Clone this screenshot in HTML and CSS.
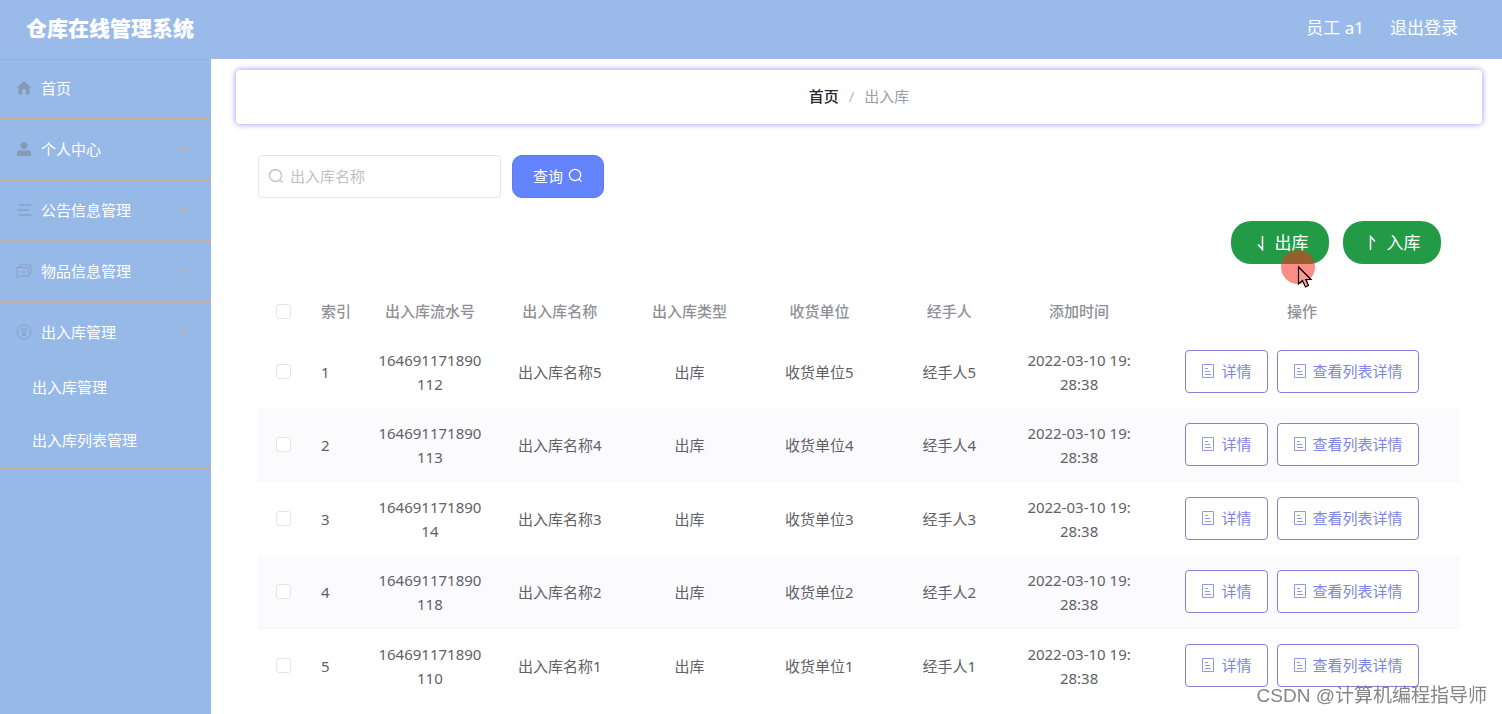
FILE: index.html
```html
<!DOCTYPE html>
<html lang="zh-CN">
<head>
<meta charset="utf-8">
<title>仓库在线管理系统</title>
<link rel="stylesheet" href="styles.css">
</head>
<body>
<svg class="sprite" aria-hidden="true">
  <symbol id="doc" viewBox="0 0 14 14"><path d="M1.5 .5h11v13h-11zM4 4.500h3M4 7.500h5M4 10.500h6" fill="none" stroke="currentColor" stroke-opacity=".85"/></symbol>
  <symbol id="search" viewBox="0 0 16 16"><circle cx="7.500" cy="7.500" r="6" fill="none" stroke="currentColor" stroke-width="1.300"/><path d="M11.800 11.800L14.500 14.500" stroke="currentColor" stroke-width="1.300"/></symbol>
  <symbol id="chev" viewBox="0 0 10 10"><path d="M1.500 3.500L5 6.500L8.500 3.500" fill="none" stroke="currentColor" stroke-width="1.500"/></symbol>
</svg>
<header class="topbar">
  <h1 class="brand">仓库在线管理系统</h1>
  <div class="account"><span>员工 a1</span><a class="logout" href="#">退出登录</a></div>
</header>
<div class="layout">
  <nav class="sidebar">
    <ul class="menu">
      <li class="menu-item"><a class="menu-link" href="#">
        <svg class="menu-icon" viewBox="0 0 16 16"><path d="M8 1L0.500 8H2.500V14.500H6V10.500Q8 8.500 10 10.500V14.500H13.500V8H15.500Z" fill="currentColor"/></svg>首页</a></li>
      <li class="menu-item"><a class="menu-link" href="#">
        <svg class="menu-icon" viewBox="0 0 16 16"><circle cx="8" cy="4.500" r="3.500" fill="currentColor"/><path d="M1 15V12Q1 9.500 4 9.500H12Q15 9.500 15 12V15Z" fill="currentColor"/></svg>个人中心<svg class="chev"><use href="#chev"/></svg></a></li>
      <li class="menu-item"><a class="menu-link" href="#">
        <svg class="menu-icon thin" viewBox="0 0 16 16"><path d="M3 3H15M1 8H13M3 13H15" fill="none" stroke="currentColor" stroke-width="1.500"/></svg>公告信息管理<svg class="chev"><use href="#chev"/></svg></a></li>
      <li class="menu-item"><a class="menu-link" href="#">
        <svg class="menu-icon thin" viewBox="0 0 16 16"><path d="M3.500 4V2H15V11H13M1 4.500H12.500V13H3.500L1 15ZM4 9H10" fill="none" stroke="currentColor"/></svg>物品信息管理<svg class="chev"><use href="#chev"/></svg></a></li>
      <li class="menu-item open"><a class="menu-link" href="#">
        <svg class="menu-icon thin" viewBox="0 0 16 16"><circle cx="8" cy="8" r="7" fill="none" stroke="currentColor"/><circle cx="8" cy="6" r="2" fill="none" stroke="currentColor"/><path d="M8 8V12M6 11H10" stroke="currentColor" stroke-width="1.500"/></svg>出入库管理<svg class="chev up"><use href="#chev"/></svg></a>
        <ul class="submenu">
          <li><a class="sub-link" href="#">出入库管理</a></li>
          <li><a class="sub-link" href="#">出入库列表管理</a></li>
        </ul></li>
    </ul>
  </nav>
  <main class="main">
    <nav class="crumbs" aria-label="面包屑"><a class="crumb-home" href="#">首页</a><span class="slash">/</span><span class="crumb-here">出入库</span></nav>
    <section class="content">
      <form class="filter">
        <label class="search-box"><svg class="search-icon"><use href="#search"/></svg><input class="search-input" type="text" placeholder="出入库名称" aria-label="出入库名称"></label>
        <button class="query" type="button">查询<svg class="query-icon"><use href="#search"/></svg></button>
      </form>
      <div class="actions">
        <button class="stock" type="button"><svg class="arrow" viewBox="0 0 12 16"><path d="M8.500 1V14.500L4 9.500" fill="none" stroke="currentColor" stroke-width="1.500"/></svg>出库
          <svg class="pointer" viewBox="0 0 36 40"><circle cx="17" cy="17" r="17" fill="#f8301f" fill-opacity=".55"/><path d="M17.500 17V34L21.500 30.500L24.500 37L27.500 35.500L24.800 29.500H30Z" fill="#f99" stroke="#000" stroke-width="1.200"/></svg></button>
        <button class="stock" type="button"><svg class="arrow" viewBox="0 0 12 16"><path d="M4.500 15V1.500L9 6.500" fill="none" stroke="currentColor" stroke-width="1.500"/></svg>入库</button>
      </div>
      <table class="grid">
        <colgroup><col class="c-check"><col class="c-index"><col><col><col><col><col><col><col class="c-ops"></colgroup>
        <thead><tr><th><input class="tick" type="checkbox" aria-label="全选"></th><th class="idx">索引</th><th>出入库流水号</th><th>出入库名称</th><th>出入库类型</th><th>收货单位</th><th>经手人</th><th>添加时间</th><th>操作</th></tr></thead>
        <tbody>
          <tr><td><input class="tick" type="checkbox" aria-label="选择 1"></td><td class="idx">1</td><td>164691171890112</td><td>出入库名称5</td><td>出库</td><td>收货单位5</td><td>经手人5</td><td>2022-03-10 19:28:38</td><td><div class="ops"><button class="op" type="button"><svg class="doc"><use href="#doc"/></svg>详情</button><button class="op" type="button"><svg class="doc"><use href="#doc"/></svg>查看列表详情</button></div></td></tr>
          <tr><td><input class="tick" type="checkbox" aria-label="选择 2"></td><td class="idx">2</td><td>164691171890113</td><td>出入库名称4</td><td>出库</td><td>收货单位4</td><td>经手人4</td><td>2022-03-10 19:28:38</td><td><div class="ops"><button class="op" type="button"><svg class="doc"><use href="#doc"/></svg>详情</button><button class="op" type="button"><svg class="doc"><use href="#doc"/></svg>查看列表详情</button></div></td></tr>
          <tr><td><input class="tick" type="checkbox" aria-label="选择 3"></td><td class="idx">3</td><td>16469117189014</td><td>出入库名称3</td><td>出库</td><td>收货单位3</td><td>经手人3</td><td>2022-03-10 19:28:38</td><td><div class="ops"><button class="op" type="button"><svg class="doc"><use href="#doc"/></svg>详情</button><button class="op" type="button"><svg class="doc"><use href="#doc"/></svg>查看列表详情</button></div></td></tr>
          <tr><td><input class="tick" type="checkbox" aria-label="选择 4"></td><td class="idx">4</td><td>164691171890118</td><td>出入库名称2</td><td>出库</td><td>收货单位2</td><td>经手人2</td><td>2022-03-10 19:28:38</td><td><div class="ops"><button class="op" type="button"><svg class="doc"><use href="#doc"/></svg>详情</button><button class="op" type="button"><svg class="doc"><use href="#doc"/></svg>查看列表详情</button></div></td></tr>
          <tr><td><input class="tick" type="checkbox" aria-label="选择 5"></td><td class="idx">5</td><td>164691171890110</td><td>出入库名称1</td><td>出库</td><td>收货单位1</td><td>经手人1</td><td>2022-03-10 19:28:38</td><td><div class="ops"><button class="op" type="button"><svg class="doc"><use href="#doc"/></svg>详情</button><button class="op" type="button"><svg class="doc"><use href="#doc"/></svg>查看列表详情</button></div></td></tr>
        </tbody>
      </table>
    </section>
  </main>
</div>
<div class="watermark">CSDN @计算机编程指导师</div>
</body>
</html>
```

FILE: styles.css
```css
* { box-sizing: border-box; }
body {
  margin: 0;
  min-height: 100vh;
  display: flex;
  flex-direction: column;
  font: 15px/24px "Noto Sans", "Noto Sans CJK SC", sans-serif;
  color: #606266;
  background: #fff;
}
a { color: inherit; text-decoration: none; }
ul { list-style: none; margin: 0; padding: 0; }
button, input { font: inherit; margin: 0; }
svg { flex: none; }
.sprite { position: absolute; width: 0; height: 0; }

.topbar {
  display: flex;
  align-items: center;
  justify-content: space-between;
  height: 59px;
  padding: 0 44px 3px 26px;
  background: #9abbe9;
  color: #fff;
}
.brand { margin: 0; font-size: 21px; font-weight: 900; }
.account { display: flex; gap: 26px; font-size: 17px; }

.layout { flex: 1; display: flex; }
.sidebar { flex: none; width: 211px; background: #97b9e8; color: #fff; box-shadow: inset 0 1px #8fb0e0; }
.menu-item { border-bottom: 2px solid #c5b0a2; }
.menu-link { display: flex; align-items: center; gap: 9px; height: 59px; padding: 0 23px 1px 16px; }
.menu-item.open .menu-link { height: 58px; }
.menu-icon { width: 16px; height: 16px; color: #8799b5; }
.menu-icon.thin { color: #86a1c9; }
.chev { width: 10px; height: 10px; margin-left: auto; color: #c9ae96; }
.chev.up { transform: rotate(180deg); }
.sub-link { display: flex; align-items: center; height: 53px; padding: 0 0 2px 32px; }

.main { flex: 1; min-width: 0; padding: 11px 20px 0 25px; }
.crumbs {
  display: flex;
  align-items: center;
  justify-content: center;
  gap: 10px;
  height: 54px;
  padding-bottom: 2px;
  border-radius: 4px;
  background: #fff;
  box-shadow: 0 0 6px #918df5;
}
.crumb-home { color: #25272c; font-weight: 500; }
.slash { color: #b4b8c0; }
.crumb-here { color: #999fa9; }

.content { padding: 31px 22px 0; }
.filter { display: flex; gap: 11px; }
.search-box {
  display: flex;
  align-items: center;
  gap: 6px;
  width: 243px;
  height: 43px;
  padding: 0 9px 2px;
  border: 1px solid #e6e6ea;
  border-radius: 4px;
}
.search-icon { width: 16px; height: 16px; color: #bdbfd2; }
.search-input { flex: 1; min-width: 0; padding: 0; border: 0; outline: 0; background: none; }
.search-input::placeholder { color: #bfc0c5; opacity: 1; }
.query {
  display: flex;
  align-items: center;
  justify-content: center;
  gap: 5px;
  width: 92px;
  height: 43px;
  padding: 0 0 2px;
  border: 1px solid #5c79f2;
  border-radius: 10px;
  background: #6484fe;
  color: #fff;
}
.query-icon { width: 15px; height: 15px; }
.actions { display: flex; justify-content: flex-end; gap: 14px; padding: 23px 19px 26px; }
.stock {
  position: relative;
  display: flex;
  align-items: center;
  justify-content: center;
  gap: 9px;
  width: 98px;
  height: 43px;
  padding: 0 0 0 2px;
  border: 0;
  border-radius: 20px;
  background: #239a46;
  color: #fff;
  font-size: 17px;
}
.arrow { width: 12px; height: 16px; }
.pointer { position: absolute; left: 50px; top: 29px; width: 36px; height: 40px; z-index: 1; }

.grid { width: 100%; table-layout: fixed; border-collapse: separate; border-spacing: 0; text-align: center; }
.c-check { width: 51px; }
.c-index { width: 56px; }
.c-ops { width: 316px; }
.grid th { height: 45px; padding: 0 12px 3px; color: #909196; font-weight: 500; }
.grid td { height: 73px; padding: 12px; line-height: 24px; overflow-wrap: anywhere; word-break: break-all; }
.grid tbody tr:nth-child(even) td { height: 74px; background: #fbfbfe; border-bottom: 1px solid #f6f6f8; }
.grid .idx { padding-right: 0; text-align: left; white-space: nowrap; }
.tick {
  appearance: none;
  display: block;
  width: 15px;
  height: 15px;
  margin: 0 auto;
  border: 1px solid #e4e5ea;
  border-radius: 3px;
  background: #fff;
}
.ops { display: flex; justify-content: center; gap: 9px; }
.op {
  display: flex;
  align-items: center;
  gap: 6px;
  height: 43px;
  padding: 0 15px 2px;
  border: 1px solid #8481d9;
  border-radius: 4px;
  background: #fff;
  color: #7d86e4;
  white-space: nowrap;
}
.doc { width: 14px; height: 14px; }
.grid td:last-child { padding: 0; }

.watermark {
  position: fixed;
  right: 15px;
  bottom: 6px;
  font: 19px/24px "Liberation Sans", "Noto Sans CJK SC", sans-serif;
  color: #858585;
}
```
